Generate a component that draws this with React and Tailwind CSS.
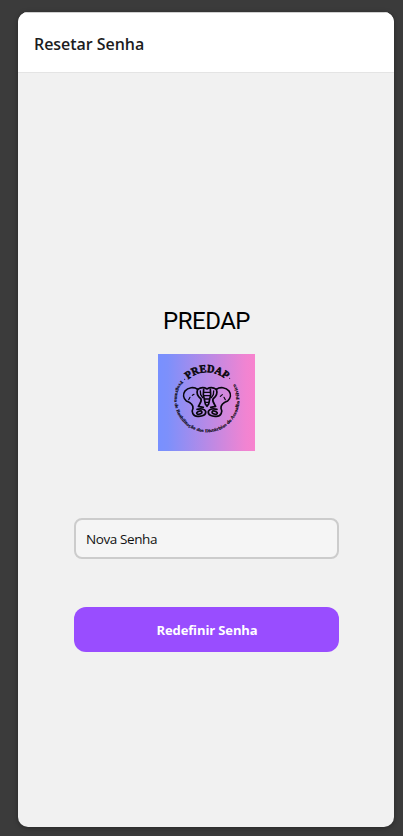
function PredapLogo() {
  return (
    <svg viewBox="24 27 291 291" className="block size-[97px]" role="img" aria-label="PREDAP">
      <defs>
        <linearGradient id="logo-bg" x1="0" x2="1" y1="0" y2="0">
          <stop offset="0" stopColor="#7890ff" />
          <stop offset="0.1" stopColor="#7d90fb" />
          <stop offset="0.9" stopColor="#f084d2" />
          <stop offset="1" stopColor="#f883ce" />
        </linearGradient>
        <path id="arc-top" d="M87 166 A84 84 0 0 1 255 166" />
        <path id="arc-bottom" d="M93 107 A97 97 0 1 0 251 110" />
      </defs>
      <rect x="24" y="27" width="291" height="291" fill="url(#logo-bg)" />
      <text
        fill="#08060d"
        stroke="#08060d"
        strokeWidth="1.6"
        fontSize="33"
        fontWeight="700"
        textAnchor="middle"
        className="font-['Liberation_Serif',serif]"
      >
        <textPath href="#arc-top" startOffset="50%" textLength="124" lengthAdjust="spacingAndGlyphs">PREDAP</textPath>
      </text>
      <text
        fill="#08060d"
        stroke="#08060d"
        strokeWidth="0.4"
        fontSize="13.5"
        fontWeight="700"
        className="font-['Liberation_Serif',serif]"
      >
        <textPath href="#arc-bottom" textLength="416" lengthAdjust="spacingAndGlyphs">
          Programa de Reabilitação dos Distúrbios do Assoalho Pélvico
        </textPath>
      </text>
      <circle cx="104" cy="103" r="1.6" />
      <circle cx="239" cy="100" r="1.6" />
      <g fill="none" stroke="#08060d" strokeWidth="5" strokeLinecap="round" strokeLinejoin="round">
        <path d="M143 133 C132 125 114 127 105 138 C98 148 100 160 109 168 C120 172 130 180 129 190 C123 200 129 214 143 214 C157 215 169 210 167 199 C164 191 151 190 141 193" />
        <path d="M199 133 C210 125 228 127 237 138 C244 148 242 160 233 168 C222 172 212 180 213 190 C219 200 213 214 199 214 C185 215 173 210 175 199 C178 191 191 190 201 193" />
        <ellipse cx="148" cy="203" rx="8" ry="4.5" transform="rotate(-20 148 203)" />
        <ellipse cx="194" cy="203" rx="8" ry="4.5" transform="rotate(20 194 203)" />
        <path d="M143 133 C139 143 143 154 153 162 C156 170 149 177 145 184 L160 187" />
        <path d="M199 133 C203 143 199 154 189 162 C186 170 193 177 197 184 L182 187" />
        <path d="M143 133 C152 127 163 127 171 132 C179 127 190 127 199 133" />
        <path d="M161 133 L160 149 L166 177 L171 184 L176 177 L182 149 L181 133" />
        <path d="M161 142 H181 M161 152 H181 M164 162 H178 M166 172 H176" strokeWidth="4" />
        <path d="M151 138 L152 149 L158 158 M191 138 L190 149 L184 158" strokeWidth="4" />
        <path d="M116 164 L120 157 M127 151 L132 148 M226 164 L222 157 M211 154 L217 149" strokeWidth="3.5" />
      </g>
    </svg>
  );
}

export default function App() {
  return (
    <div className="h-[836px] w-[403px] overflow-hidden bg-[#3b3b3b] pt-3 pl-[18px] font-['Open_Sans','Noto_Sans',sans-serif]">
      <main className="flex h-[815px] w-[376px] flex-col overflow-hidden rounded-[10px] bg-[#f1f1f1] shadow-[0_1px_5px_rgba(0,0,0,0.35)]">
        <header className="flex h-[61px] shrink-0 items-center border-t border-b border-t-[#d0d0d0] border-b-[#e4e4e4] bg-white px-4 pt-[3px]">
          <h1 className="text-base leading-6 font-semibold tracking-[-0.04px] whitespace-nowrap text-[#1c1c1e]">
            Resetar Senha
          </h1>
        </header>
        <section className="flex flex-col items-center pt-[234px]">
          <h2 className="pl-px font-['Roboto',sans-serif] text-2xl leading-7 tracking-[-0.5px] text-black">PREDAP</h2>
          <div className="mt-[19px]">
            <PredapLogo />
          </div>
          <input
            type="text"
            placeholder="Nova Senha"
            aria-label="Nova Senha"
            className="mt-[67px] h-[41px] w-[265px] rounded-lg border-2 border-[#cccccc] bg-[#f5f5f5] px-[10.5px] text-[13.5px] tracking-[-0.4px] text-[#111111] outline-none placeholder:text-[#111111]"
          />
          <button
            type="button"
            className="mt-12 h-[45px] w-[265px] rounded-xl bg-[#994dff] pt-0.5 pl-0.5 text-[13px] font-bold tracking-[-0.12px] text-white"
          >
            Redefinir Senha
          </button>
        </section>
      </main>
    </div>
  );
}
